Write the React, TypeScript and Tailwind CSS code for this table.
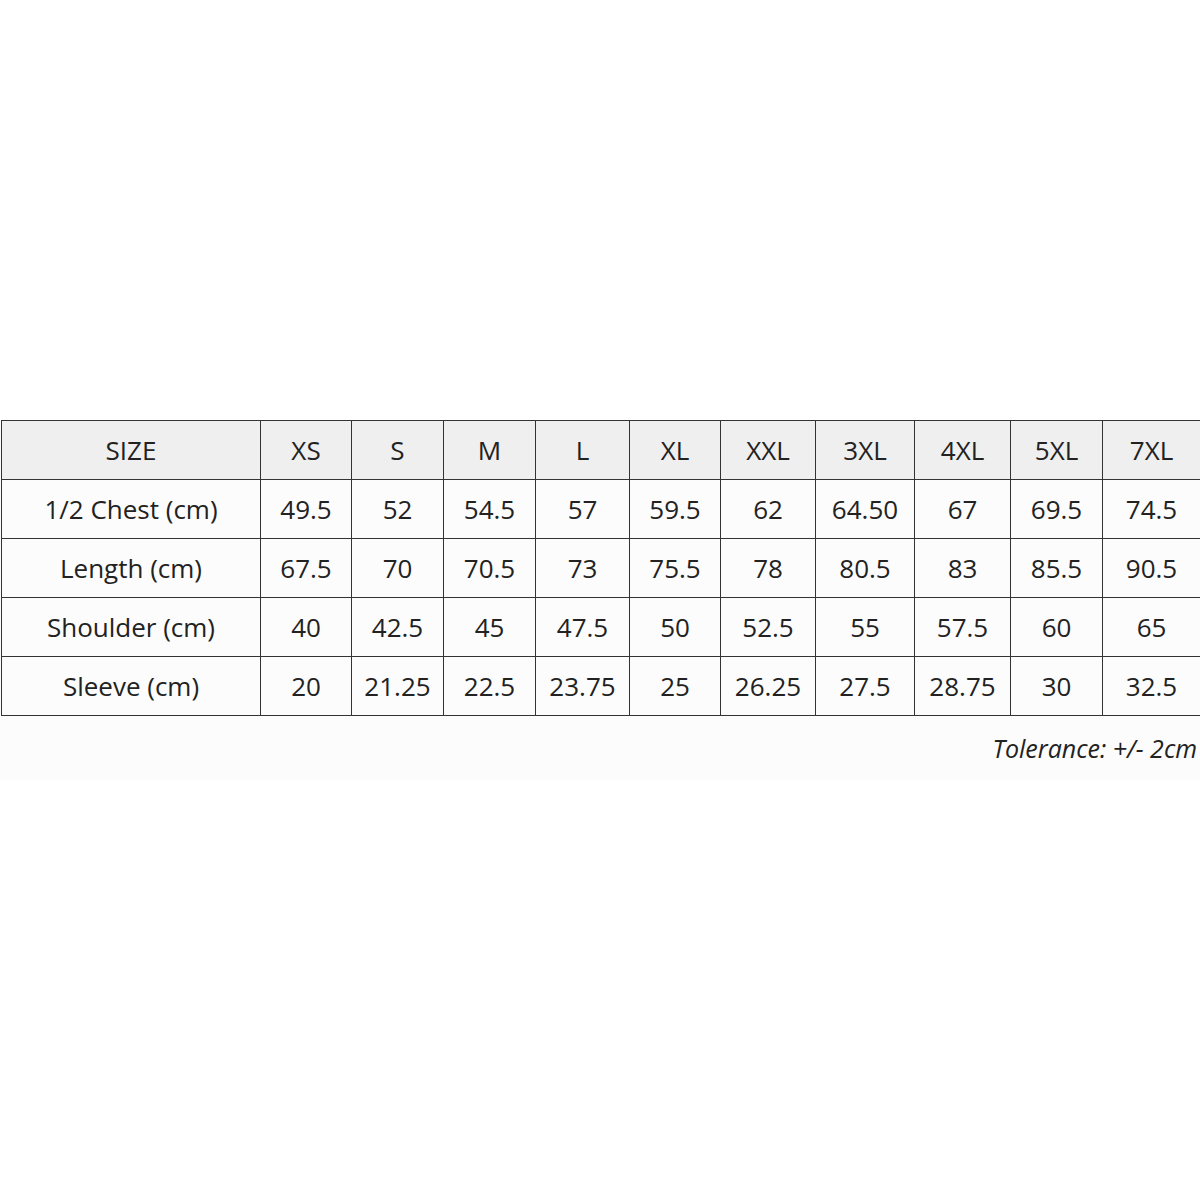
const sizes = ['XS', 'S', 'M', 'L', 'XL', 'XXL', '3XL', '4XL', '5XL', '7XL'];

const rows: { label: string; values: string[] }[] = [
  { label: '1/2 Chest (cm)', values: ['49.5', '52', '54.5', '57', '59.5', '62', '64.50', '67', '69.5', '74.5'] },
  { label: 'Length (cm)', values: ['67.5', '70', '70.5', '73', '75.5', '78', '80.5', '83', '85.5', '90.5'] },
  { label: 'Shoulder (cm)', values: ['40', '42.5', '45', '47.5', '50', '52.5', '55', '57.5', '60', '65'] },
  { label: 'Sleeve (cm)', values: ['20', '21.25', '22.5', '23.75', '25', '26.25', '27.5', '28.75', '30', '32.5'] },
];

// column widths measured off the chart
const widths = [259, 91, 92, 92, 94, 91, 95, 99, 96, 92, 98];

export default function App() {
  return (
    <div className="w-[1200px] h-[1200px] bg-white overflow-hidden font-['Open_Sans',sans-serif] text-[#222]">
      <div className="mt-[420px] h-[360px] bg-[#fcfcfc] pl-px">
        <table className="table-fixed border-collapse w-[1200px] text-[26px]">
          <colgroup>
            {widths.map((w, i) => (
              <col key={i} style={{ width: w }} />
            ))}
          </colgroup>
          <thead>
            <tr className="bg-[#efefef]">
              <th className="h-[59px] border border-[#333] font-normal text-center p-0">SIZE</th>
              {sizes.map((s) => (
                <th key={s} className="h-[59px] border border-[#333] font-normal text-center p-0">
                  {s}
                </th>
              ))}
            </tr>
          </thead>
          <tbody>
            {rows.map((r) => (
              <tr key={r.label}>
                <td className="h-[59px] border border-[#333] text-center p-0">{r.label}</td>
                {r.values.map((v, i) => (
                  <td key={i} className="h-[59px] border border-[#333] text-center p-0">
                    {v}
                  </td>
                ))}
              </tr>
            ))}
          </tbody>
        </table>
        <div className="flex justify-end mr-[3px] mt-[15px]">
          <span className="italic text-[25px] leading-[34px]">Tolerance: +/- 2cm</span>
        </div>
      </div>
    </div>
  );
}
